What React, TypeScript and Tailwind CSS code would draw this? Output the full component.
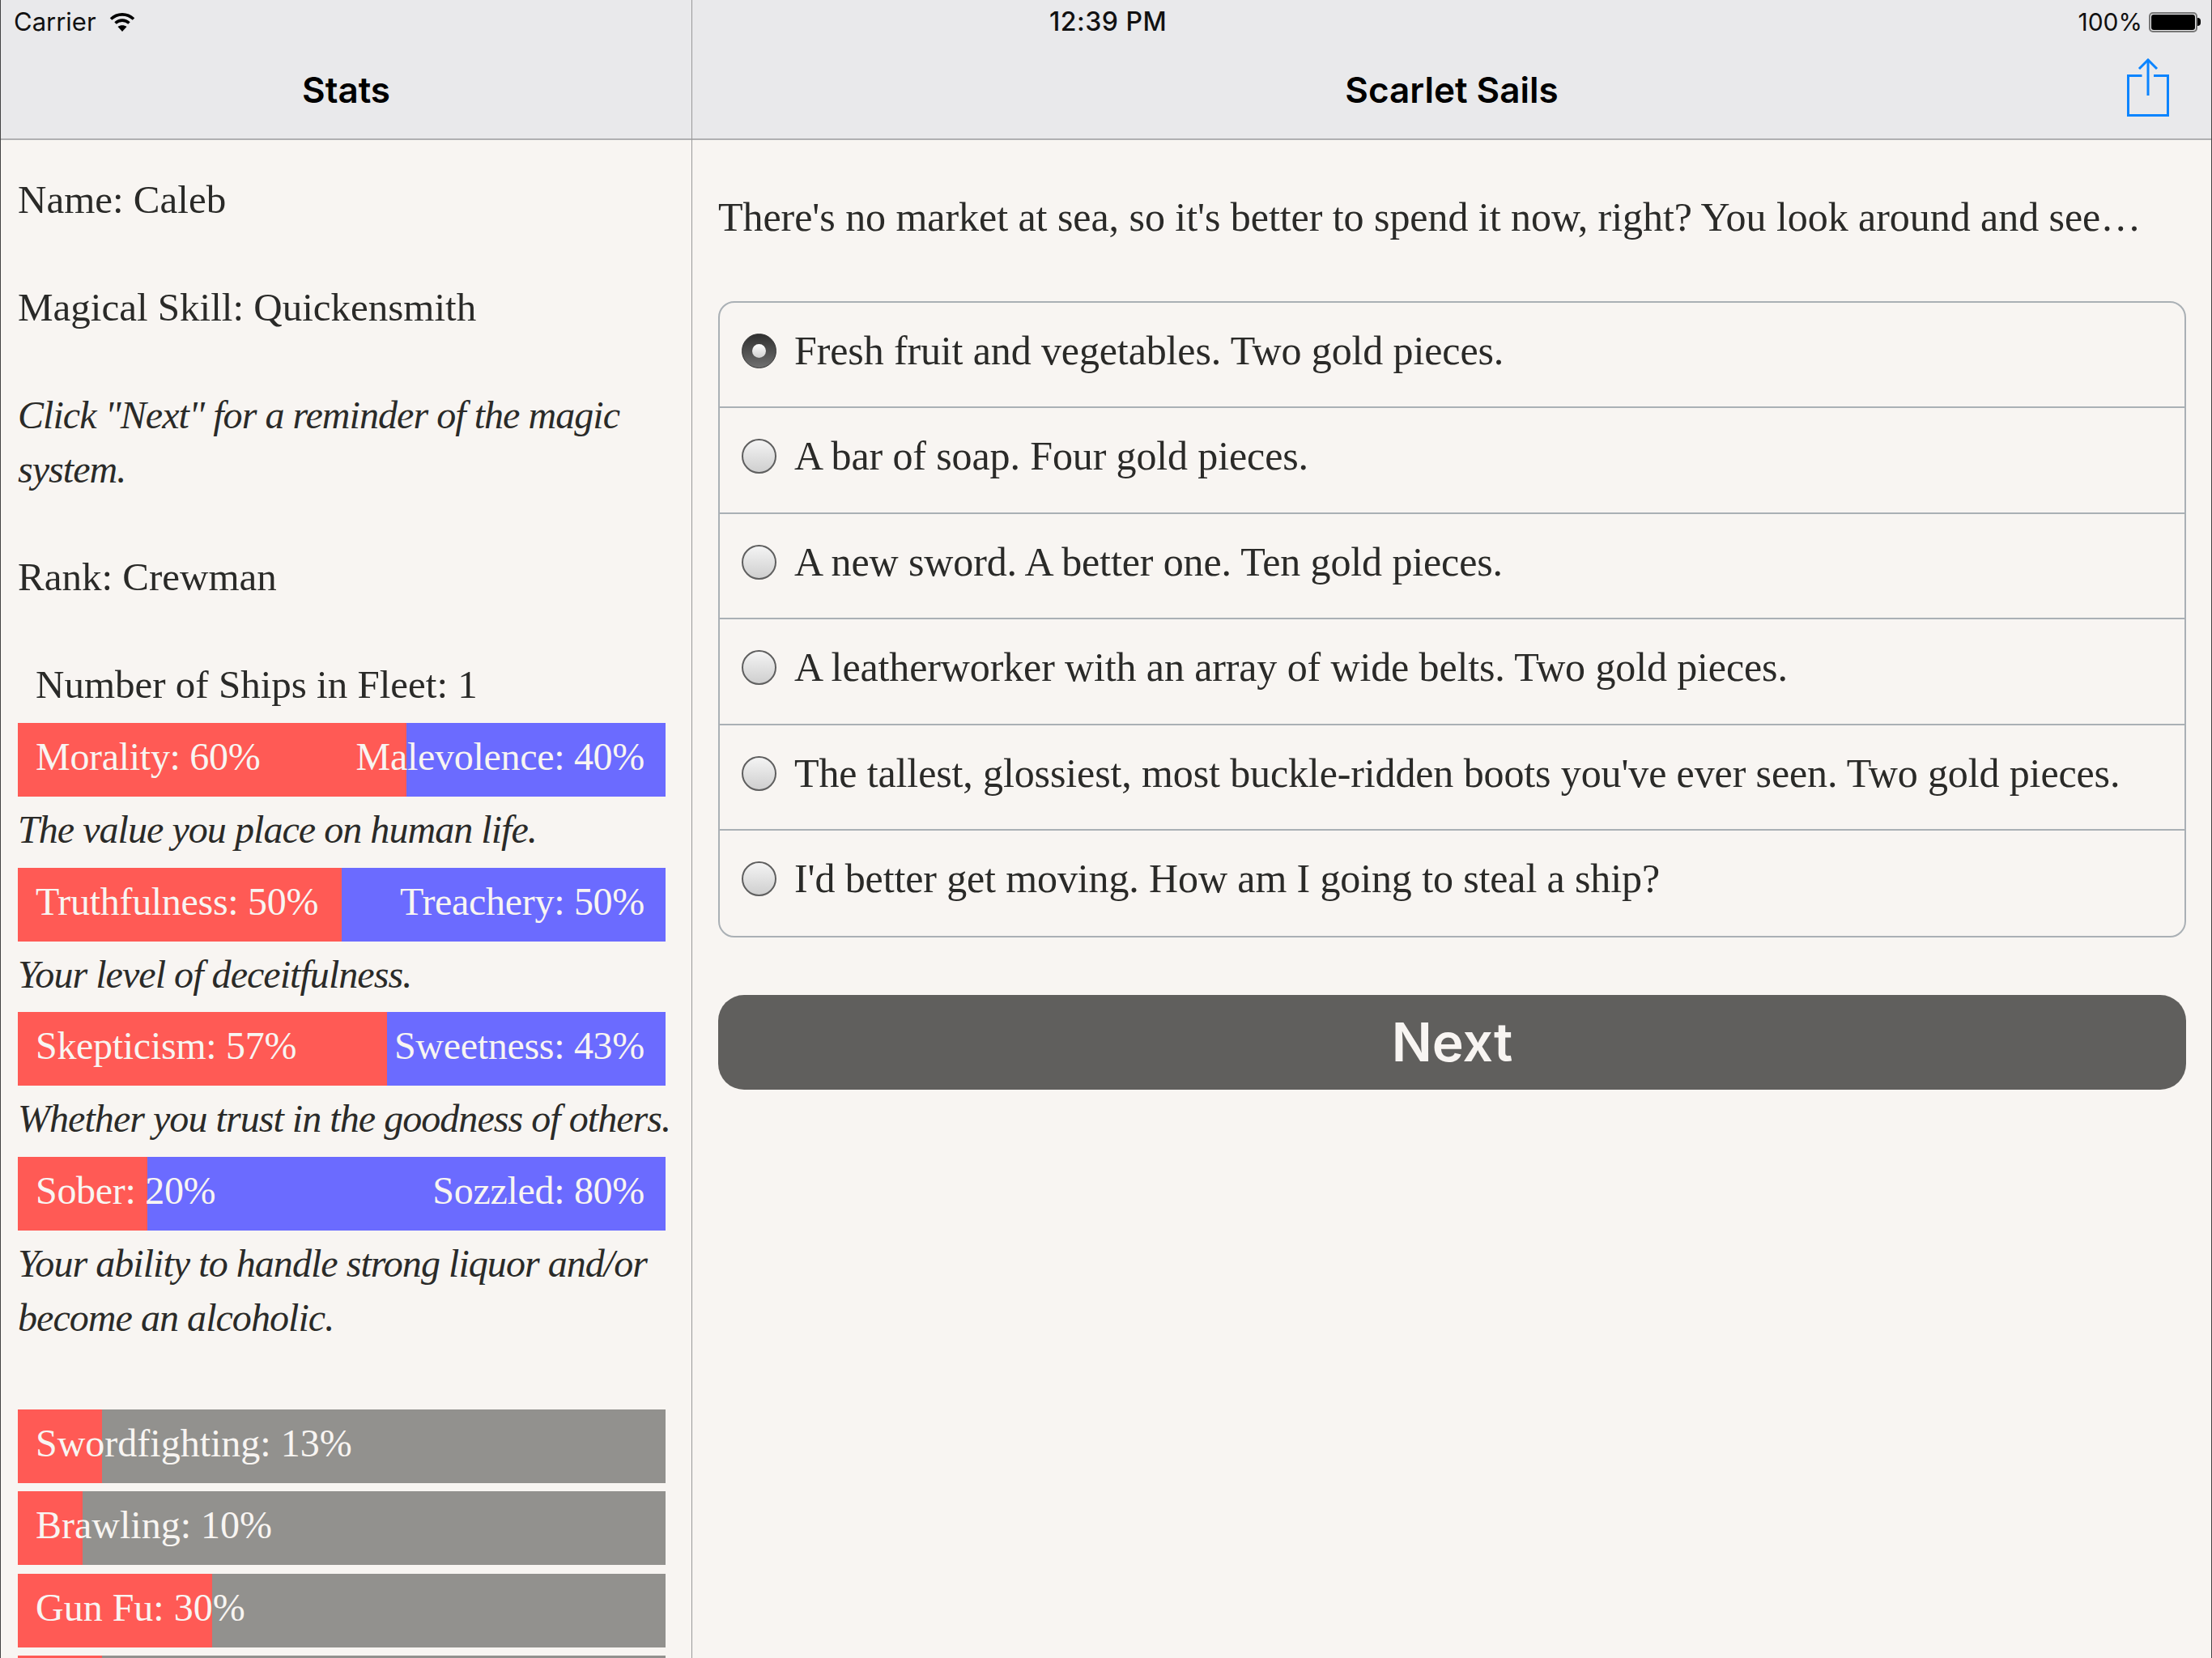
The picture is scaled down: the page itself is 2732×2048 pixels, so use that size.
const serif = "font-['Liberation_Serif',serif]";

type Duo = { left: string; right: string; pct: number; note: string[] };

const duos: Duo[] = [
  { left: "Morality: 60%", right: "Malevolence: 40%", pct: 60, note: ["The value you place on human life."] },
  { left: "Truthfulness: 50%", right: "Treachery: 50%", pct: 50, note: ["Your level of deceitfulness."] },
  { left: "Skepticism: 57%", right: "Sweetness: 43%", pct: 57, note: ["Whether you trust in the goodness of others."] },
  { left: "Sober: 20%", right: "Sozzled: 80%", pct: 20, note: ["Your ability to handle strong liquor and/or", "become an alcoholic."] },
];

// last bar is cut off by the bottom of the screen, only its top edge shows
const skills = [
  { label: "Swordfighting: 13%", pct: 13 },
  { label: "Brawling: 10%", pct: 10 },
  { label: "Gun Fu: 30%", pct: 30 },
  { label: "", pct: 13 },
];

const choices = [
  "Fresh fruit and vegetables. Two gold pieces.",
  "A bar of soap. Four gold pieces.",
  "A new sword. A better one. Ten gold pieces.",
  "A leatherworker with an array of wide belts. Two gold pieces.",
  "The tallest, glossiest, most buckle-ridden boots you've ever seen. Two gold pieces.",
  "I'd better get moving. How am I going to steal a ship?",
];

function Wifi() {
  return (
    <svg width="32" height="24" viewBox="0 0 32 24" fill="none" stroke="#000" strokeWidth="3.6">
      <path d="M2 8.500C10 1 22 1 30 8.500" />
      <path d="M7.500 13.500C12.500 9 19.500 9 24.500 13.500" />
      <path d="M16 24L10.500 18C13.500 15.500 18.500 15.500 21.500 18Z" fill="#000" stroke="none" />
    </svg>
  );
}

function Battery() {
  return (
    <div className="flex items-center">
      <div className="h-[25px] w-[60px] rounded-[5px] border-2 border-[#777] p-px">
        <div className="h-full w-full rounded-[3px] bg-black" />
      </div>
      <div className="h-[10px] w-[4px] rounded-r-full bg-black" />
    </div>
  );
}

function ShareIcon() {
  return (
    <svg width="52" height="72" viewBox="0 0 52 72" fill="none" stroke="#0a84ff" strokeWidth="3">
      <path d="M18.500 21.500H1.500V70.500H50.500V21.500H33" />
      <path d="M26 1.500V46" />
      <path d="M15 13L26 2L37 13" />
    </svg>
  );
}

function Radio({ checked }: { checked: boolean }) {
  if (checked) {
    return (
      <div className="flex h-[43px] w-[43px] shrink-0 items-center justify-center rounded-full border border-[#333] bg-gradient-to-b from-[#303030] to-[#707070]">
        <div className="h-[17px] w-[17px] rounded-full bg-gradient-to-b from-white to-[#d0d0d0]" />
      </div>
    );
  }
  return <div className="h-[43px] w-[43px] shrink-0 rounded-full border-2 border-[#5f5f5f] bg-gradient-to-b from-[#f4f4f4] to-[#cfcfcf]" />;
}

function DuoBar({ left, right, pct }: Duo) {
  return (
    <div
      className="flex h-[91px] items-center justify-between pb-[8px] pl-[22px] pr-[26px] text-[48px] tracking-[-0.3px] text-[#f8f5f2]"
      style={{ background: `linear-gradient(to right, #ff5a55 ${pct}%, #6b6bff ${pct}%)` }}
    >
      <span>{left}</span>
      <span>{right}</span>
    </div>
  );
}

function SkillBar({ label, pct }: { label: string; pct: number }) {
  return (
    <div
      className="flex h-[91px] shrink-0 items-center pb-[8px] pl-[22px] text-[48px] text-[#f8f5f2]"
      style={{ background: `linear-gradient(to right, #ff5a55 ${pct}%, #92918e ${pct}%)` }}
    >
      {label}
    </div>
  );
}

export default function App() {
  return (
    <div className={`flex h-[2048px] w-[2732px] overflow-hidden border-x border-[#444] bg-[#f8f5f2] text-[#2a2a28] ${serif}`}>
      {/* Stats column */}
      <aside className="flex h-full w-[854px] shrink-0 flex-col overflow-hidden border-r border-[#999]">
        <header className="h-[173px] shrink-0 border-b-2 border-[#b0b0b2] bg-[#e9e9eb] font-['Inter',sans-serif]">
          <div className="flex h-[54px] items-center gap-[16px] pl-[16px] text-[31px] text-[#111]">
            Carrier
            <Wifi />
          </div>
          <div className="flex h-[115px] items-start justify-center pt-[31px] text-[44px] leading-[52px] font-semibold text-black">Stats</div>
        </header>

        <div className="flex flex-col pl-[21px] pr-[32px] text-[49px] leading-[67px]">
          <p className="mt-[40px]">Name: Caleb</p>
          <p className="mt-[66px]">Magical Skill: Quickensmith</p>
          <p className="mt-[66px] text-[48px] tracking-[-0.95px] italic">
            Click "Next" for a reminder of the magic
            <br />
            system.
          </p>
          <p className="mt-[66px]">Rank: Crewman</p>
          <p className="mt-[66px] pl-[22px]">Number of Ships in Fleet: 1</p>

          <div className="mt-[14px] flex flex-col">
            {duos.map((d) => (
              <div key={d.left} className="flex flex-col">
                <DuoBar {...d} />
                <div className="min-h-[87.5px] whitespace-nowrap pt-[7px] text-[48px] tracking-[-0.95px] italic">
                  {d.note.map((line) => (
                    <p key={line}>{line}</p>
                  ))}
                </div>
              </div>
            ))}
          </div>

          <div className="mt-[80.500px] flex flex-col gap-[10.300px]">
            {skills.map((s) => (
              <SkillBar key={s.pct + s.label} {...s} />
            ))}
          </div>
        </div>
      </aside>

      {/* Story column */}
      <main className="flex min-w-0 flex-1 flex-col">
        <header className="relative h-[173px] shrink-0 border-b-2 border-[#b0b0b2] bg-[#e9e9eb] font-['Inter',sans-serif]">
          <div className="flex h-[54px] items-center pl-[441px] pr-[13px] text-[30px] text-[#111]">
            <span className="text-[32px] font-medium tracking-[0.5px]">12:39 PM</span>
            <span className="ml-auto flex items-center gap-[8px]">
              100%
              <Battery />
            </span>
          </div>
          <div className="flex h-[115px] items-start justify-center pt-[31px] text-[44px] leading-[52px] font-semibold text-black">Scarlet Sails</div>
          <div className="absolute right-[52px] top-[72px]">
            <ShareIcon />
          </div>
        </header>

        <div className="flex flex-col pl-[32px] pr-[31px]">
          <p className="mt-[62px] whitespace-nowrap text-[50px] leading-[67px] tracking-[-0.05px]">
            There's no market at sea, so it's better to spend it now, right? You look around and see…
          </p>
          <ul className="mt-[70px] flex flex-col rounded-[20px] border-2 border-[#aab0b5]">
            {choices.map((c, i) => (
              <li key={c} className="flex h-[130.400px] gap-[22px] border-b-2 border-[#aab0b5] pl-[27px] pt-[38px] text-[50px] leading-[56px] tracking-[-0.12px] last:border-b-0">
                <Radio checked={i === 0} />
                <span className="mt-[-7px] whitespace-nowrap">{c}</span>
              </li>
            ))}
          </ul>
          <button className="mt-[71px] flex h-[117px] items-center justify-center rounded-[32px] bg-[#605f5d] font-['Inter',sans-serif] text-[66px] font-semibold text-[#f8f5f2]">
            Next
          </button>
        </div>
      </main>
    </div>
  );
}
